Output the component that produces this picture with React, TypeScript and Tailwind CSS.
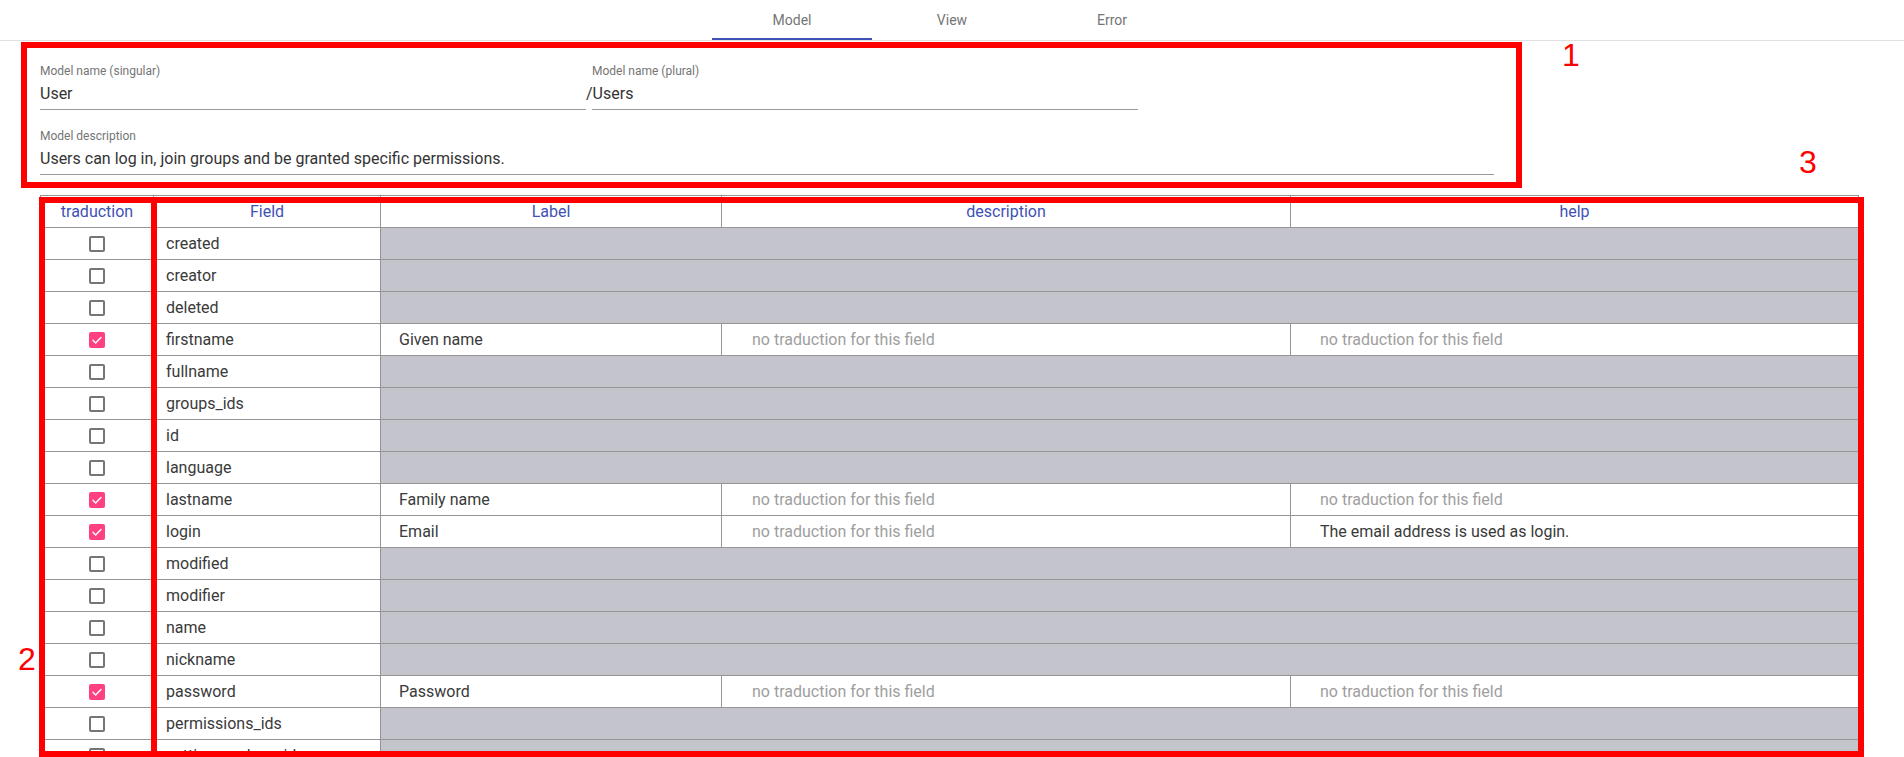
const rows: { name: string; on?: boolean; label?: string; help?: string }[] = [
  { name: 'created' },
  { name: 'creator' },
  { name: 'deleted' },
  { name: 'firstname', on: true, label: 'Given name' },
  { name: 'fullname' },
  { name: 'groups_ids' },
  { name: 'id' },
  { name: 'language' },
  { name: 'lastname', on: true, label: 'Family name' },
  { name: 'login', on: true, label: 'Email', help: 'The email address is used as login.' },
  { name: 'modified' },
  { name: 'modifier' },
  { name: 'name' },
  { name: 'nickname' },
  { name: 'password', on: true, label: 'Password' },
  { name: 'permissions_ids' },
  { name: 'settings_values_ids' },
];

const Check = ({ on }: { on?: boolean }) =>
  on ? (
    <span className="w-4 h-4 rounded-[2px] bg-[#ff4081] flex items-center justify-center">
      <svg width="16" height="16" viewBox="0 0 16 16" fill="none">
        <path d="M4 8.3l2.6 2.6L12 5.5" stroke="white" strokeWidth="1.4" strokeLinecap="round" strokeLinejoin="round" />
      </svg>
    </span>
  ) : (
    <span className="w-4 h-4 rounded-[2px] border-2 border-[#757575] bg-white"></span>
  );

const Field = ({ label, value, width, prefix }: { label: string; value: string; width: string; prefix?: string }) => (
  <div className={width}>
    <div className="text-[12px] leading-4 text-[#757575]">{label}</div>
    <div className="mt-[3px] pb-[3px] border-b border-[#999] text-[16px] leading-6 text-[#333]">
      {prefix && <span className="-ml-[6px]">{prefix}</span>}
      {value}
    </div>
  </div>
);

export default function App() {
  return (
    <div className="relative min-h-screen bg-white font-['Roboto',sans-serif] text-[#333]">
      {/* tabs */}
      <div className="h-[41px] border-b border-[#e0e0e0] flex justify-center">
        {['Model', 'View', 'Error'].map((t, i) => (
          <div key={t} className="relative w-[160px] h-10 flex items-center justify-center text-[14px] text-[#757575]">
            {t}
            {i === 0 && <span className="absolute left-0 right-0 bottom-0 h-[2px] bg-[#3f51b5]"></span>}
          </div>
        ))}
      </div>

      {/* model form */}
      <div className="pl-[40px] pt-[22px]">
        <div className="flex gap-[6px]">
          <Field label="Model name (singular)" value="User" width="w-[546px]" />
          <Field label="Model name (plural)" value="Users" prefix="/" width="w-[546px]" />
        </div>
        <div className="mt-[18px]">
          <Field
            label="Model description"
            value="Users can log in, join groups and be granted specific permissions."
            width="w-[1454px]"
          />
        </div>
      </div>

      {/* fields table */}
      <div className="ml-[40px] mt-[20px] w-[1819px] border-l border-t border-[#959595] text-[16px]">
        <div className="flex h-8 text-[#3f51b5]">
          <div className="w-[113px] border-r border-b border-[#959595] flex items-center justify-center">traduction</div>
          <div className="w-[227px] border-r border-b border-[#959595] flex items-center justify-center">Field</div>
          <div className="w-[341px] border-r border-b border-[#959595] flex items-center justify-center">Label</div>
          <div className="w-[569px] border-r border-b border-[#959595] flex items-center justify-center">description</div>
          <div className="flex-1 border-r border-b border-[#959595] flex items-center justify-center">help</div>
        </div>
        {rows.map((r) => (
          <div key={r.name} className="flex h-8">
            <div className="w-[113px] border-r border-b border-[#959595] flex items-center justify-center">
              <Check on={r.on} />
            </div>
            <div className="w-[227px] border-r border-b border-[#959595] flex items-center pl-3 text-[#3a3a3a]">{r.name}</div>
            {r.on ? (
              <>
                <div className="w-[341px] border-r border-b border-[#959595] flex items-center pl-[18px] text-[#3a3a3a]">{r.label}</div>
                <div className="w-[569px] border-r border-b border-[#959595] flex items-center pl-[30px] text-[#9e9e9e]">
                  no traduction for this field
                </div>
                <div
                  className={`flex-1 border-r border-b border-[#959595] flex items-center pl-[29px] ${
                    r.help ? 'text-[#3a3a3a]' : 'text-[#9e9e9e]'
                  }`}
                >
                  {r.help || 'no traduction for this field'}
                </div>
              </>
            ) : (
              <div className="flex-1 border-r border-b border-[#959595] bg-[#c3c4cc]"></div>
            )}
          </div>
        ))}
      </div>

      {/* annotation overlays */}
      <div className="absolute left-[21px] top-[42px] w-[1501px] h-[146px] border-[6px] border-[#ff0000] pointer-events-none"></div>
      <div className="absolute left-[39px] top-[197px] w-[118px] h-[560px] border-[6px] border-[#ff0000] pointer-events-none"></div>
      <div className="absolute left-[151px] top-[197px] w-[1713px] h-[560px] border-[6px] border-[#ff0000] pointer-events-none"></div>
      <div className="absolute left-[1562px] top-[39px] text-[32px] leading-none text-[#ff0000] font-['Liberation_Sans',sans-serif]">1</div>
      <div className="absolute left-[18px] top-[643px] text-[32px] leading-none text-[#ff0000] font-['Liberation_Sans',sans-serif]">2</div>
      <div className="absolute left-[1799px] top-[146px] text-[32px] leading-none text-[#ff0000] font-['Liberation_Sans',sans-serif]">3</div>
    </div>
  );
}
